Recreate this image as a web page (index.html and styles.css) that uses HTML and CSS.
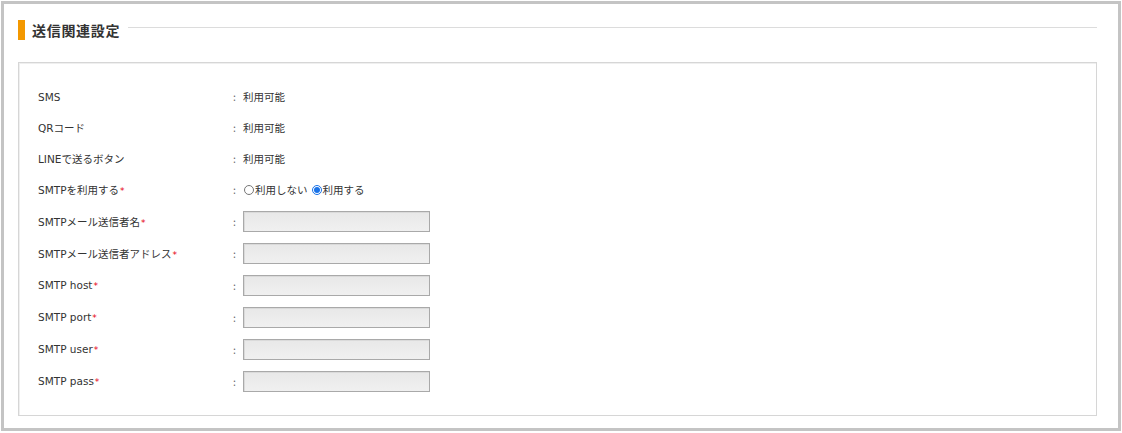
FILE: index.html
```html
<!DOCTYPE html>
<html lang="ja">
<head>
<meta charset="utf-8">
<link rel="stylesheet" href="styles.css">
</head>
<body>
<div class="frame">
  <div class="head">
    <span class="bar"></span>
    <h2 class="title">送信関連設定</h2>
    <span class="rule"></span>
  </div>
  <div class="box">
    <div class="row"><div class="label">SMS</div><div class="val"><span class="colon">:</span>利用可能</div></div>
    <div class="row"><div class="label">QRコード</div><div class="val"><span class="colon">:</span>利用可能</div></div>
    <div class="row"><div class="label">LINEで送るボタン</div><div class="val"><span class="colon">:</span>利用可能</div></div>
    <div class="row"><div class="label">SMTPを利用する<span class="req">*</span></div><div class="val"><span class="colon">:</span><label class="opt"><input type="radio" name="smtp" class="radio">利用しない</label><label class="opt"><input type="radio" name="smtp" class="radio" checked>利用する</label></div></div>
    <div class="row tall"><div class="label">SMTPメール送信者名<span class="req">*</span></div><div class="val"><span class="colon">:</span><input class="field" type="text"></div></div>
    <div class="row tall"><div class="label">SMTPメール送信者アドレス<span class="req">*</span></div><div class="val"><span class="colon">:</span><input class="field" type="text"></div></div>
    <div class="row tall"><div class="label">SMTP host<span class="req">*</span></div><div class="val"><span class="colon">:</span><input class="field" type="text"></div></div>
    <div class="row tall"><div class="label">SMTP port<span class="req">*</span></div><div class="val"><span class="colon">:</span><input class="field" type="text"></div></div>
    <div class="row tall"><div class="label">SMTP user<span class="req">*</span></div><div class="val"><span class="colon">:</span><input class="field" type="text"></div></div>
    <div class="row tall"><div class="label">SMTP pass<span class="req">*</span></div><div class="val"><span class="colon">:</span><input class="field" type="password"></div></div>
  </div>
</div>
</body>
</html>
```
FILE: styles.css
```css
* { box-sizing: border-box; }
html, body { margin: 0; padding: 0; background: #fff; }
body {
  font-family: "DejaVu Sans", "Noto Sans CJK JP", sans-serif;
  font-size: 10.5px;
  color: #333;
}
.frame {
  margin: 1px;
  width: 1120px;
  height: 430px;
  border: 3px solid #c4c4c4;
  padding: 16px 21px 12px 14px;
}
.head {
  display: flex;
  align-items: center;
  height: 20px;
}
.bar {
  width: 7px;
  height: 20px;
  background: #f39800;
}
.title {
  margin: 0 0 0 7px;
  font-family: "Noto Sans CJK JP", sans-serif;
  font-size: 14px;
  font-weight: bold;
  color: #333;
  letter-spacing: 0.7px;
}
.rule {
  flex: 1;
  align-self: flex-start;
  margin: 7px 0 0 8px;
  border-top: 1px solid #dcdcdc;
}
.box {
  margin-top: 22px;
  border: 1px solid #d6d6d6;
  box-shadow: inset 1px 1px 0 #efefef;
  padding: 18px 19px 18px 19px;
}
.row {
  display: flex;
  align-items: center;
  height: 31px;
}
.row.tall { height: 32px; }
.label {
  width: 195px;
  flex: none;
}
.req {
  color: #e60012;
  font-size: 9px;
  margin-left: 1px;
}
.val {
  display: flex;
  align-items: center;
  font-family: "Noto Sans CJK JP", sans-serif;
}
.colon {
  display: inline-block;
  width: 10px;
  color: #666;
}
.opt {
  display: inline-flex;
  align-items: center;
  margin-right: 3px;
}
.radio {
  width: 10px;
  height: 10px;
  margin: 0 1px 0 1px;
  accent-color: #1a73e8;
}
.field {
  width: 187px;
  height: 21px;
  margin: 0;
  border: 1px solid #a9a9a9;
  background: linear-gradient(#e8e8e8, #f0f0f0);
  box-shadow: inset 1px 1px 0 #dadada;
}
```
